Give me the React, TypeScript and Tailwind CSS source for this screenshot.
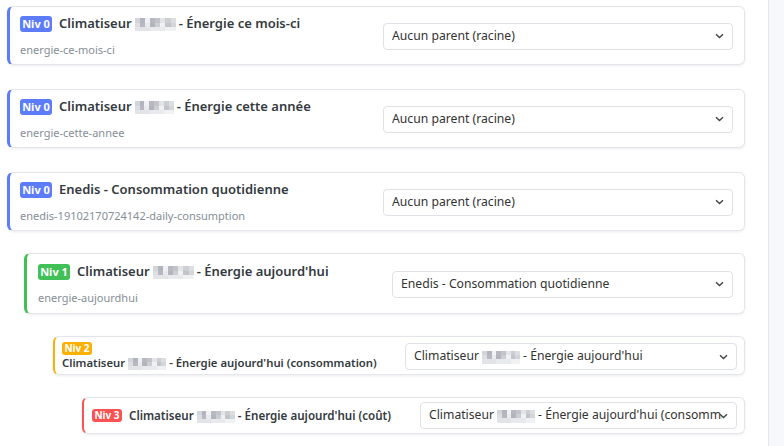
import React from "react";

const FONT = { fontFamily: '"Noto Sans", "Open Sans", sans-serif' };

const TONES = ["#c8cbd2", "#b3b6be", "#e3e5e9", "#a8a6b2", "#d4d6db", "#eceef1", "#bfc2c9", "#9fa3ad", "#dcdee2"];

function Blur({ w, h = 13 }: { w: number; h?: number }) {
  const cols = Math.max(1, Math.round(w / 5));
  const cells: React.ReactNode[] = [];
  for (let r = 0; r < 3; r++) {
    for (let c = 0; c < cols; c++) {
      const t = TONES[(c * 7 + r * 4 + (c % 3) * r) % TONES.length];
      cells.push(<span key={r + "-" + c} style={{ background: t }} />);
    }
  }
  return (
    <span
      className="inline-grid align-middle mx-[3px] opacity-80"
      style={{ width: w, height: h, gridTemplateColumns: `repeat(${cols}, 1fr)`, gridTemplateRows: "repeat(3, 1fr)" }}
    >
      {cells}
    </span>
  );
}

function Chevron() {
  return (
    <svg width="9" height="6" viewBox="0 0 9 6" className="pointer-events-none absolute right-[8px] top-1/2 -translate-y-1/2">
      <path d="M1 1.2 L4.5 4.6 L8 1.2" fill="none" stroke="#444" strokeWidth="1.4" />
    </svg>
  );
}

function Select({ children, width, h = 27 }: { children: React.ReactNode; width: number; h?: number }) {
  return (
    <div
      className="relative shrink-0 flex items-center rounded-[4px] border border-[#dee2e6] bg-white pl-[8px] pr-[14px] text-[12.2px] text-[#333] overflow-hidden whitespace-nowrap"
      style={{ width, height: h }}
    >
      <span className="overflow-hidden whitespace-nowrap">{children}</span>
      <Chevron />
    </div>
  );
}

function Badge({ level, color, small }: { level: number; color: string; small?: boolean }) {
  return (
    <span
      className={
        "inline-flex items-center justify-center rounded-[3px] font-bold text-white shrink-0 " +
        (small ? "h-[13px] w-[30px] text-[10px]" : "h-[16px] w-[32px] text-[11px]")
      }
      style={{ background: color }}
    >
      Niv {level}
    </span>
  );
}

export default function App() {
  return (
    <div className="flex w-[784px] h-[446px] overflow-hidden bg-white" style={FONT}>
      <div className="w-[768px] shrink-0 pt-[6px] pl-[7px] pr-[23px]">
        {/* Card 1 */}
        <div className="flex items-center rounded-[6px] border border-[#e3e5ea] border-l-[3px] border-l-[#5c7cfa] shadow-[0_1px_3px_rgba(0,0,0,0.08)] pl-[10px] pr-[11px] pt-[7px] pb-[6px]">
          <div className="flex-1 min-w-0">
            <div className="flex items-center h-[20px] gap-[7px]">
              <Badge level={0} color="#5c7cfa" />
              <span className="text-[13px] font-semibold text-[#343a40] whitespace-nowrap">
                Climatiseur<Blur w={41} />- Énergie ce mois-ci
              </span>
            </div>
            <div className="mt-[8px] text-[11px] leading-[16px] text-[#868e96]">energie-ce-mois-ci</div>
          </div>
          <Select width={350}>Aucun parent (racine)</Select>
        </div>

        {/* Card 2 */}
        <div className="mt-[24px] flex items-center rounded-[6px] border border-[#e3e5ea] border-l-[3px] border-l-[#5c7cfa] shadow-[0_1px_3px_rgba(0,0,0,0.08)] pl-[10px] pr-[11px] pt-[7px] pb-[6px]">
          <div className="flex-1 min-w-0">
            <div className="flex items-center h-[20px] gap-[7px]">
              <Badge level={0} color="#5c7cfa" />
              <span className="text-[13px] font-semibold text-[#343a40] whitespace-nowrap">
                Climatiseur<Blur w={39} />- Énergie cette année
              </span>
            </div>
            <div className="mt-[8px] text-[11px] leading-[16px] text-[#868e96]">energie-cette-annee</div>
          </div>
          <Select width={350}>Aucun parent (racine)</Select>
        </div>

        {/* Card 3 */}
        <div className="mt-[24px] flex items-center rounded-[6px] border border-[#e3e5ea] border-l-[3px] border-l-[#5c7cfa] shadow-[0_1px_3px_rgba(0,0,0,0.08)] pl-[10px] pr-[11px] pt-[7px] pb-[6px]">
          <div className="flex-1 min-w-0">
            <div className="flex items-center h-[20px] gap-[7px]">
              <Badge level={0} color="#5c7cfa" />
              <span className="text-[13px] font-semibold text-[#343a40] whitespace-nowrap">
                Enedis - Consommation quotidienne
              </span>
            </div>
            <div className="mt-[8px] text-[11px] leading-[16px] text-[#868e96]">enedis-19102170724142-daily-consumption</div>
          </div>
          <Select width={350}>Aucun parent (racine)</Select>
        </div>

        {/* Card 4 - Niv 1 */}
        <div className="mt-[22px] ml-[17px] flex items-center rounded-[6px] border border-[#e3e5ea] border-l-[3px] border-l-[#40c057] shadow-[0_1px_3px_rgba(0,0,0,0.08)] pl-[11px] pr-[11px] pt-[8px] pb-[7px]">
          <div className="flex-1 min-w-0">
            <div className="flex items-center h-[20px] gap-[7px]">
              <Badge level={1} color="#40c057" />
              <span className="text-[13px] font-semibold text-[#343a40] whitespace-nowrap">
                Climatiseur<Blur w={41} />- Énergie aujourd'hui
              </span>
            </div>
            <div className="mt-[8px] text-[11px] leading-[16px] text-[#868e96]">energie-aujourdhui</div>
          </div>
          <Select width={341}>Enedis - Consommation quotidienne</Select>
        </div>

        {/* Card 5 - Niv 2 */}
        <div className="mt-[22px] ml-[46px] flex items-center rounded-[6px] border border-[#e3e5ea] border-l-[2px] border-l-[#fab005] shadow-[0_1px_3px_rgba(0,0,0,0.08)] pl-[7px] pr-[7px] pt-[5px] pb-[3px]">
          <div className="flex-1 min-w-0 flex flex-col items-start">
            <Badge level={2} color="#fab005" small />
            <div className="text-[11.3px] leading-[16px] font-semibold text-[#343a40] whitespace-nowrap">
              Climatiseur<Blur w={38} h={12} />- Énergie aujourd'hui (consommation)
            </div>
          </div>
          <Select width={332}>
            Climatiseur<Blur w={38} />- Énergie aujourd'hui
          </Select>
        </div>

        {/* Card 6 - Niv 3 */}
        <div className="mt-[22px] ml-[75px] flex items-center rounded-[6px] border border-[#e3e5ea] border-l-[2px] border-l-[#fa5252] shadow-[0_1px_3px_rgba(0,0,0,0.08)] pl-[8px] pr-[7px] py-[4px]">
          <div className="flex-1 min-w-0 flex items-center gap-[7px]">
            <Badge level={3} color="#fa5252" small />
            <span className="text-[11.6px] font-semibold text-[#343a40] whitespace-nowrap">
              Climatiseur<Blur w={38} h={12} />- Énergie aujourd'hui (coût)
            </span>
          </div>
          <Select width={317}>
            Climatiseur<Blur w={38} />- Énergie aujourd'hui (consommation)
          </Select>
        </div>
      </div>
      <div className="flex-1 border-l border-[#e5e7eb] bg-[#f7f8fb]" />
    </div>
  );
}
